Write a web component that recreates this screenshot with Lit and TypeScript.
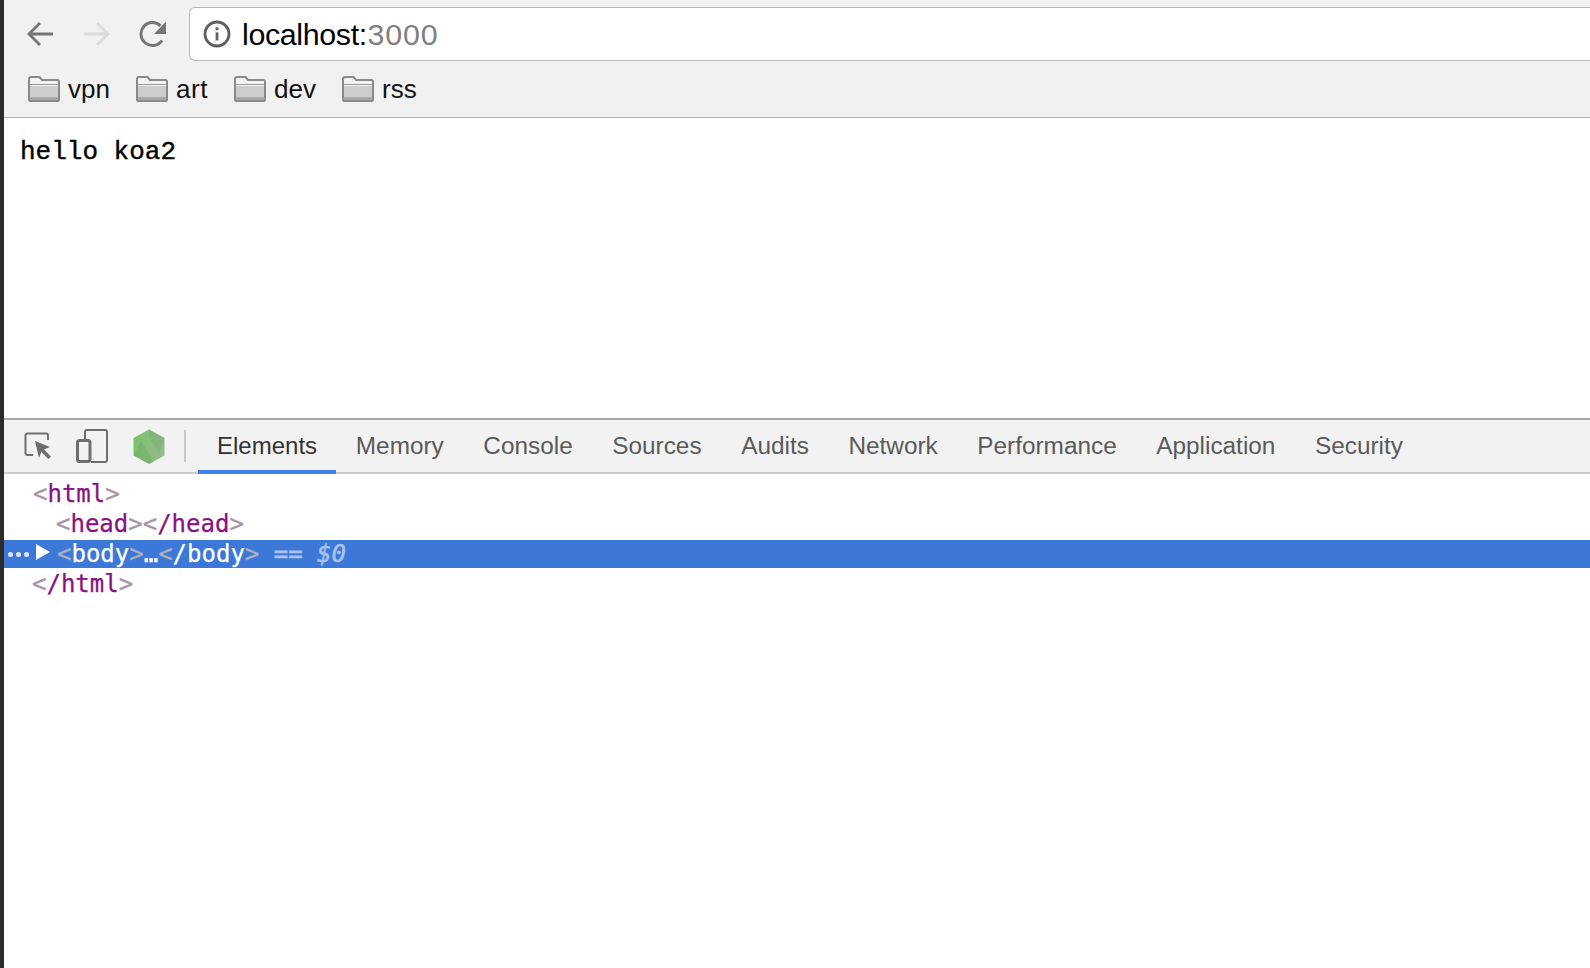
import { LitElement, html, css, svg } from "lit";
import { customElement } from "lit/decorators.js";

const folder = svg`<svg class="folder" width="32" height="26" viewBox="0 0 32 26">
  <path d="M1 23.5V3C1 2 1.700 1 3 1H11.500L14 4H29.500C30.500 4 31 4.700 31 5.500V23.500C31 24.500 30.500 25 29.500 25H2.500C1.500 25 1 24.500 1 23.500Z" fill="#f2f2f2" stroke="#8a8a8a" stroke-width="2"/>
  <path d="M2 10H30V24H2Z" fill="#cdcdcd"/>
  <path d="M2 8.500H30" stroke="#9a9a9a" stroke-width="1"/>
  <path d="M2 22.500H30" stroke="#a2a2a2" stroke-width="2.500"/>
</svg>`;

@customElement("app-root")
export class AppRoot extends LitElement {
  static styles = css`
    :host { display: flex; width: 1590px; height: 968px; overflow: hidden; background: #fff; font-family: "Liberation Sans", Arial, sans-serif; }
    .edge { width: 4px; flex: none; background: #2b2b2b; }
    .main { flex: 1; min-width: 0; display: flex; flex-direction: column; }
    .chrome { height: 118px; flex: none; box-sizing: border-box; background: #f1f1f1; border-bottom: 1px solid #b4b4b4; padding-top: 7px; }
    .nav { display: flex; align-items: center; height: 54px; }
    .navbtns { display: flex; align-items: center; gap: 28.500px; padding-left: 22px; width: 185px; box-sizing: border-box; flex: none; }
    .navbtns svg { display: block; }
    .omni { flex: 1; height: 54px; box-sizing: border-box; background: #fff; border: 1px solid #b9b9b9; border-right: none; border-radius: 6px 0 0 6px; display: flex; align-items: center; padding-left: 13px; gap: 11px; font-size: 30.400px; }
    .host { color: #000; letter-spacing: -0.350px; }
    .port { color: #808080; letter-spacing: 0.900px; margin-left: 0.500px; }
    .marks { display: flex; align-items: center; padding-left: 24px; height: 56px; gap: 26px; font-size: 26px; color: #111; }
    .mark { display: flex; align-items: center; gap: 8px; }
    .mark:nth-child(2) span { letter-spacing: 0.600px; }
    .page { height: 300px; flex: none; box-sizing: border-box; padding: 19px 0 0 16px; font-family: "Liberation Mono", monospace; font-size: 26px; line-height: 30px; color: #000; -webkit-text-stroke: 0.400px #000; }
    .dev { flex: 1; display: flex; flex-direction: column; border-top: 2px solid #a8a8a8; }
    .tabs { height: 54px; flex: none; box-sizing: border-box; background: #f2f2f2; border-bottom: 2px solid #cccccc; display: flex; align-items: stretch; }
    .tools { display: flex; align-items: center; width: 194px; flex: none; box-sizing: border-box; padding-left: 20px; }
    .tools svg { display: block; flex: none; }
    .sep { width: 2px; height: 32px; background: #c8c8c8; margin-left: 19px; }
    .tab { box-sizing: border-box; padding: 2px 19.800px 0; margin-bottom: -2px; border-bottom: 4px solid transparent; display: flex; align-items: center; font-size: 24.350px; color: #5a5a5a; white-space: nowrap; }
    .tab.on { color: #333; border-bottom-color: #3d80ee; font-size: 24px; padding: 2px 19px 0; }
    .tree { padding-top: 5px; font-family: "DejaVu Sans Mono", monospace; font-size: 24px; line-height: 30px; -webkit-text-stroke: 0.250px currentColor; }
    .row { display: flex; align-items: center; height: 30px; white-space: pre; color: #881280; }
    .row b { font-weight: normal; color: #a894a6; }
    .r1 { padding-left: 29px; }
    .r2 { padding-left: 52px; }
    .r4 { padding-left: 28px; }
    .sel { background: #3b78d8; color: #fff; height: 28px; margin: 1px 0; padding-left: 4px; }
    .sel b { color: #b0b0bc; }
    .dots { width: 24px; display: flex; gap: 3px; }
    .dots i { width: 5px; height: 5px; border-radius: 50%; background: #dfe8f8; }
    .sel svg { display: block; margin-right: 3px; margin-top: -4px; }
    .eq, .eqn { color: #a9c1ec; -webkit-text-stroke: 0.600px #a9c1ec; }
    .eq { font-style: italic; }
  `;

  render() {
    const tabs = ["Memory", "Console", "Sources", "Audits", "Network", "Performance", "Application", "Security"];
    return html`
      <div class="edge"></div>
      <div class="main">
        <div class="chrome">
          <div class="nav">
            <div class="navbtns">
              <svg width="28" height="26" viewBox="0 0 28 26"><path d="M27 13H3M14 2 3 13l11 11" fill="none" stroke="#757575" stroke-width="2.800"/></svg>
              <svg width="28" height="26" viewBox="0 0 28 26"><path d="M1 13h24M14 2l11 11-11 11" fill="none" stroke="#dadada" stroke-width="2.800"/></svg>
              <svg width="28" height="28" viewBox="0 0 28 28"><path d="M23 20.500A11.500 11.500 0 1 1 21.500 5.800" fill="none" stroke="#757575" stroke-width="3"/><path d="M27 1.500V14H15Z" fill="#757575"/></svg>
            </div>
            <div class="omni">
              <svg width="28" height="28" viewBox="0 0 28 28"><circle cx="14" cy="14" r="12" fill="none" stroke="#5f5f5f" stroke-width="2.800"/><rect x="12.600" y="12.400" width="2.800" height="8" fill="#5f5f5f"/><rect x="12.600" y="7.400" width="2.800" height="2.800" fill="#5f5f5f"/></svg>
              <span><span class="host">localhost:</span><span class="port">3000</span></span>
            </div>
          </div>
          <div class="marks">
            ${["vpn", "art", "dev", "rss"].map((m) => html`<div class="mark">${folder}<span>${m}</span></div>`)}
          </div>
        </div>
        <div class="page">hello koa2</div>
        <div class="dev">
          <div class="tabs">
            <div class="tools">
              <svg width="28" height="28" viewBox="0 0 28 28"><path d="M9 23H3.500C2.300 23 1.500 22.200 1.500 21V3.500C1.500 2.300 2.300 1.500 3.500 1.500H22C23.200 1.500 24 2.300 24 3.500V8" fill="none" stroke="#6e6e6e" stroke-width="2"/><path d="M11 9 26 15l-6 2.500 7 7-2.600 2.600-7-7L15 26Z" fill="#6e6e6e"/></svg>
              <svg style="margin-left:24px" width="32" height="34" viewBox="0 0 32 34"><path d="M9 10V3C9 2 10 1 11 1H29C30 1 31 2 31 3V31C31 32 30 33 29 33H15" fill="none" stroke="#6e6e6e" stroke-width="2"/><rect x="1.500" y="11.500" width="12.500" height="21" rx="2" fill="none" stroke="#6e6e6e" stroke-width="3"/></svg>
              <svg style="margin-left:25px" width="32" height="35" viewBox="0 0 32 35"><defs><linearGradient id="ng" x1="0" y1="0" x2="1" y2="0"><stop offset="0" stop-color="#7cc46a"/><stop offset="1" stop-color="#95b890"/></linearGradient></defs><path d="M16 0.500 31.500 9V26.500L16 35 0.500 26.500V9Z" fill="url(#ng)"/><path d="M16 0.500 31.500 9 26 24 16 8Z" fill="#6aa864" opacity=".3"/><path d="M0.500 26.500 8 12 21 33 16 35Z" fill="#5f9e5e" opacity=".3"/></svg>
              <div class="sep"></div>
            </div>
            <div class="tab on">Elements</div>
            ${tabs.map((t) => html`<div class="tab">${t}</div>`)}
          </div>
          <div class="tree">
            <div class="row r1"><b>&lt;</b>html<b>&gt;</b></div>
            <div class="row r2"><b>&lt;</b>head<b>&gt;&lt;</b>/head<b>&gt;</b></div>
            <div class="row sel"><span class="dots"><i></i><i></i><i></i></span><svg width="22" height="18" viewBox="0 0 16 18"><path d="M1 1 15 9 1 17Z" fill="#fff"/></svg><b>&lt;</b>body<b>&gt;</b>…<b>&lt;</b>/body<b>&gt;</b><span class="eqn"> == </span><span class="eq">$0</span></div>
            <div class="row r4"><b>&lt;</b>/html<b>&gt;</b></div>
          </div>
        </div>
      </div>
    `;
  }
}
